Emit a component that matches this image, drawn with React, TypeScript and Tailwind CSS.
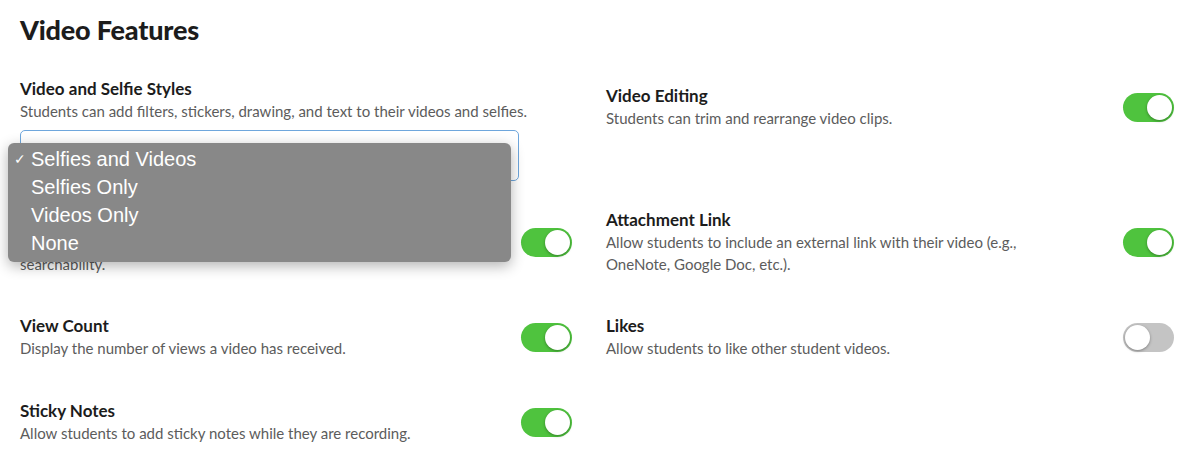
import { ReactNode } from 'react'

function Toggle({ on }: { on: boolean }) {
  return (
    <div
      className={
        on
          ? 'relative w-[51px] h-[29px] shrink-0 rounded-full bg-[#4fc33e]'
          : 'relative w-[51px] h-[29px] shrink-0 rounded-full bg-[#c4c4c4]'
      }
    >
      <div
        className={
          on
            ? 'absolute top-[2px] right-[2px] w-[25px] h-[25px] rounded-full bg-white shadow-[0_1px_3px_rgba(0,0,0,0.35)]'
            : 'absolute top-[2px] left-[2px] w-[25px] h-[25px] rounded-full bg-white shadow-[0_1px_3px_rgba(0,0,0,0.35)]'
        }
      />
    </div>
  )
}

function Setting({
  title,
  children,
  on,
  className = '',
  titleHidden = false,
}: {
  title: string
  children: ReactNode
  on: boolean
  className?: string
  titleHidden?: boolean
}) {
  return (
    <div className={`flex items-center justify-between ${className}`}>
      <div className="max-w-[440px]">
        <div className={`text-[17px] leading-[22px] font-bold text-[#1c1c1c] ${titleHidden ? 'invisible' : ''}`}>
          {title}
        </div>
        <div className="text-[15px] leading-[22px] text-[#5c5c5c]">{children}</div>
      </div>
      <Toggle on={on} />
    </div>
  )
}

const options = ['Selfies and Videos', 'Selfies Only', 'Videos Only', 'None']

export default function App() {
  return (
    <div className="min-h-[475px] bg-white px-[20px] pt-[14px] font-['Lato',sans-serif]">
      <h1 className="text-[27px] leading-[32px] font-black text-[#1c1c1c] tracking-[-0.2px]">Video Features</h1>

      <div className="mt-[32px] grid grid-cols-[552px_568px] gap-x-[34px]">
        {/* left column */}
        <div className="flex flex-col">
          <div>
            <div className="text-[17px] leading-[22px] font-bold text-[#1c1c1c]">Video and Selfie Styles</div>
            <div className="text-[15px] leading-[22px] text-[#5c5c5c]">
              Students can add filters, stickers, drawing, and text to their videos and selfies.
            </div>
          </div>

          <div className="relative mt-[8px] w-[499px] h-[51px] rounded-[5px] border border-[#6ea6dc] bg-white">
            <div className="absolute z-10 top-[12px] left-[-13px] w-[503px] pt-[2px] pb-[5px] rounded-[6px] bg-[#888888] shadow-[0_4px_14px_rgba(0,0,0,0.3)] font-['Liberation_Sans',Arial,sans-serif] text-white">
              {options.map((o, i) => (
                <div key={o} className="flex items-center h-[28px] text-[20px]">
                  <span className="w-[23px] pl-[6px] text-[14px]">{i === 0 ? '✓' : ''}</span>
                  <span>{o}</span>
                </div>
              ))}
            </div>
          </div>

          {/* this row sits under the open menu; only its last line shows */}
          <Setting title="Video Titles" on titleHidden className="mt-[28px]">
            <span className="invisible">Allow students to add a title to their video for easier browsing and</span>
            <br />
            searchability.
          </Setting>

          <Setting title="View Count" on className="mt-[40px]">
            Display the number of views a video has received.
          </Setting>

          <Setting title="Sticky Notes" on className="mt-[41px]">
            Allow students to add sticky notes while they are recording.
          </Setting>
        </div>

        {/* right column */}
        <div className="flex flex-col pt-[7px]">
          <Setting title="Video Editing" on>
            Students can trim and rearrange video clips.
          </Setting>

          <Setting title="Attachment Link" on className="mt-[80px]">
            Allow students to include an external link with their video (e.g.,
            OneNote, Google Doc, etc.).
          </Setting>

          <Setting title="Likes" on={false} className="mt-[40px]">
            Allow students to like other student videos.
          </Setting>
        </div>
      </div>
    </div>
  )
}
